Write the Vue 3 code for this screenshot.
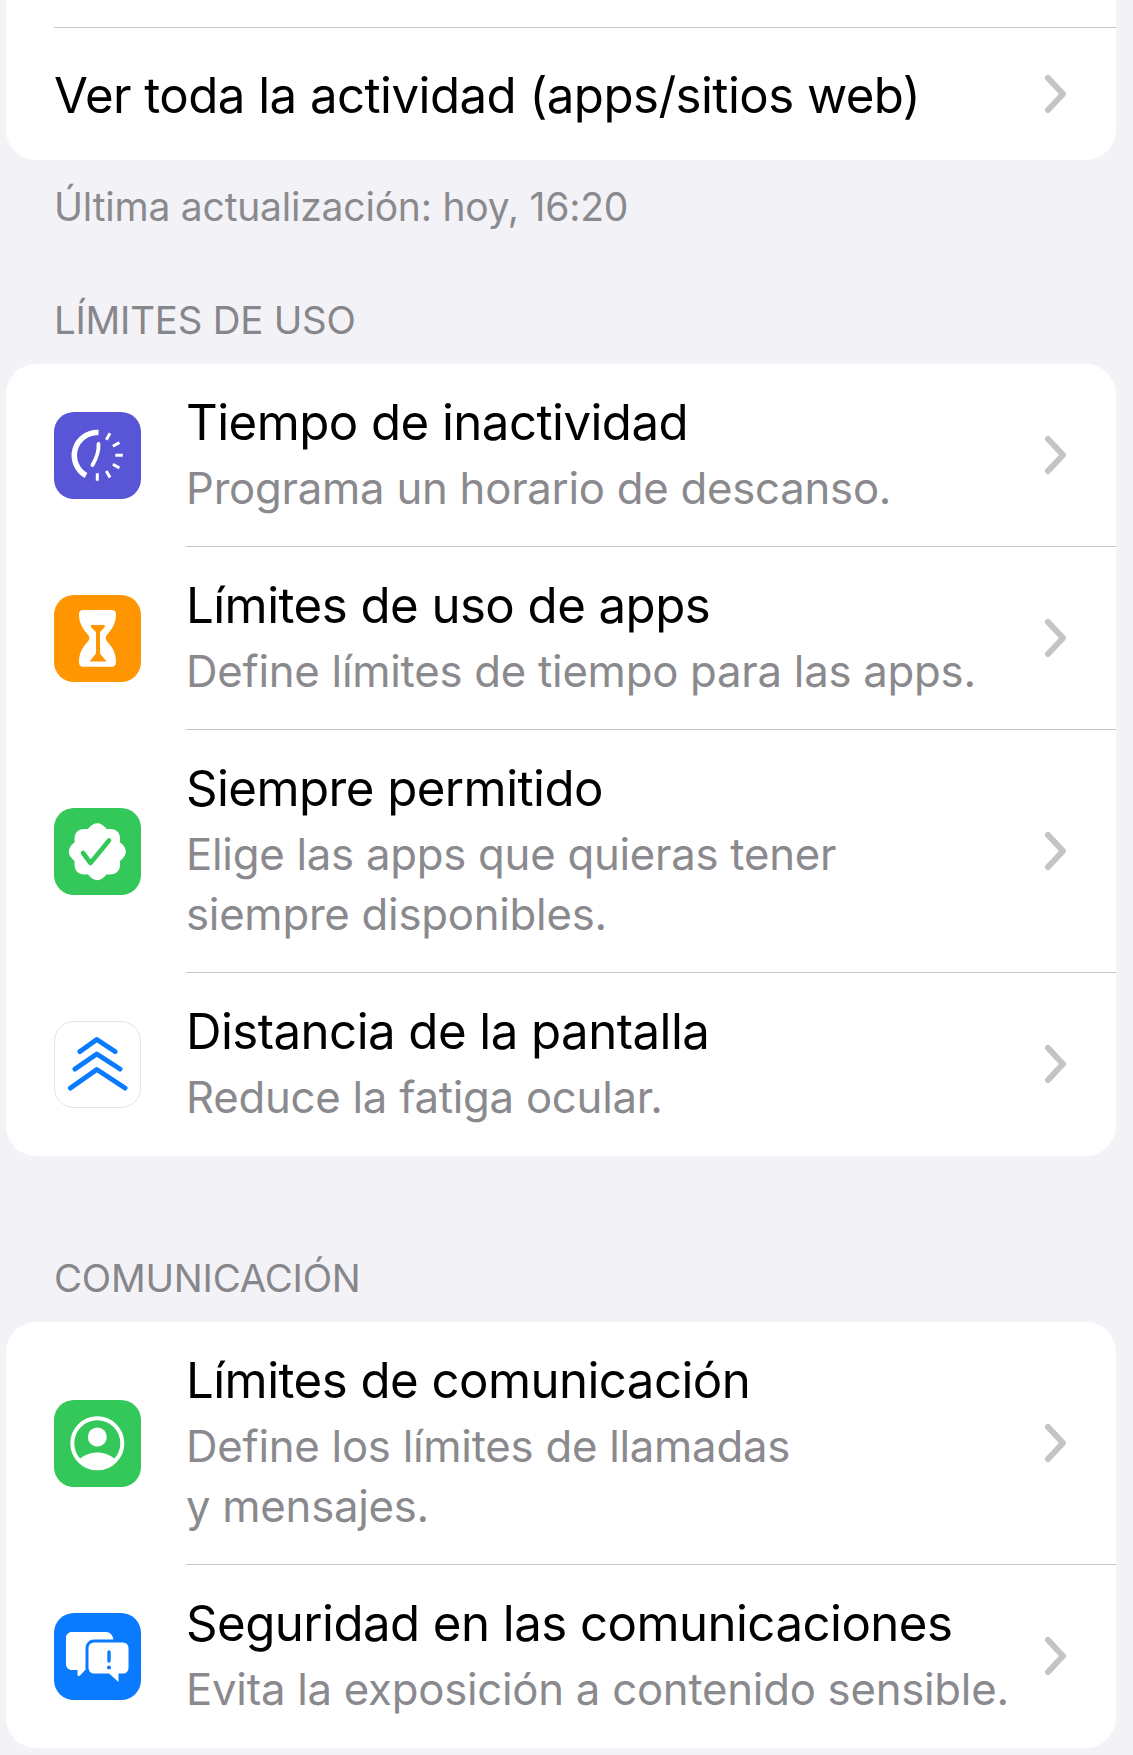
<template>
  <div class="page">
    <section class="card">
      <div class="top-stub"></div>
      <div class="row single">
        <span class="single-title">Ver toda la actividad (apps/sitios web)</span>
        <svg class="chevron" viewBox="0 0 24 40"><path d="M4 4l15 16L4 36" /></svg>
      </div>
    </section>
    <p class="footer-note">Última actualización: hoy, 16:20</p>

    <h2 class="section-title first">LÍMITES DE USO</h2>
    <section class="card">
      <div v-for="item in limits" :key="item.title" class="row">
        <span :class="['icon', item.icon]">
          <svg v-if="item.icon === 'downtime'" viewBox="0 0 87 87">
            <path class="line" d="M44.5 20.500A23 23 0 0 0 32 63.500" stroke-width="5.500" />
            <path class="line round" d="M44.500 32C45 39 42 47 38.500 53" stroke-width="3.800" />
            <path v-for="t in ticks" :key="t" class="line" :d="t" stroke-width="3" />
          </svg>
          <svg v-else-if="item.icon === 'hourglass'" viewBox="0 0 87 87">
            <path fill="#fff" d="M29 15h29c2.500 0 4 1.500 4 4 0 8-3 14-8 19.500-3 3-3 6 0 9 5 5.500 8 11 8 20 0 2.700-1.500 4.200-4 4.200H29c-2.500 0-4-1.500-4-4.200 0-9 3-14.500 8-20 3-3 3-6 0-9-5-5.500-8-11.500-8-19.500 0-2.500 1.500-4 4-4z" />
            <path fill="#ff9500" d="M36.700 30h14.300l-.8 2.800-4.200 4.200V58.500l6.500 8H35.500l6.500-8V37l-4.500-4.200z" />
          </svg>
          <svg v-else-if="item.icon === 'always'" viewBox="0 0 87 87">
            <path fill="#fff" :d="badge" />
            <path class="check" d="M29 45l7.500 10L55 32.500" />
          </svg>
          <svg v-else viewBox="0 0 87 87">
            <path class="blue-line" d="M26 30.500L42.800 18.500 61 30.500" />
            <path class="blue-line" d="M21 48L42.800 33 66 48" />
            <path class="blue-line" d="M16.500 67L42.800 48.500 71 67" />
          </svg>
        </span>
        <div class="row-main">
          <div class="row-text">
            <div class="row-title">{{ item.title }}</div>
            <div class="row-sub" v-html="item.sub"></div>
          </div>
          <svg class="chevron" viewBox="0 0 24 40"><path d="M4 4l15 16L4 36" /></svg>
        </div>
      </div>
    </section>

    <h2 class="section-title">COMUNICACIÓN</h2>
    <section class="card">
      <div v-for="item in comms" :key="item.title" class="row">
        <span :class="['icon', item.icon]">
          <svg v-if="item.icon === 'contact'" viewBox="0 0 87 87">
            <circle cx="43.300" cy="43.300" r="25" fill="none" stroke="#fff" stroke-width="4" />
            <circle cx="43.300" cy="37" r="9.500" fill="#fff" />
            <path fill="#fff" d="M25.500 59C31 54.500 37.500 52.500 43.300 52.500S55.500 54.500 61 59A25 25 0 0 1 25.500 59z" />
          </svg>
          <svg v-else viewBox="0 0 87 87">
            <path fill="#fff" d="M18 19h34c4 0 7 3 7.500 8H40c-4 0-7 3-7 7v21l-7 7.500c-1 1-2.500.5-2.500-1V57H18c-3.500 0-6-2.500-6-6V25c0-3.500 2.500-6 6-6z" />
            <path fill="#fff" stroke="#0a7aff" stroke-width="3" d="M40 28h29c4 0 7 3 7 7v20c0 4-3 7-7 7h-3v7c0 1.500-1.500 2-2.500 1L54.500 62H40c-4 0-7-3-7-7V35c0-4 3-7 7-7z" />
            <path class="bang" d="M55 39v9" />
            <circle cx="55" cy="54.500" r="2" fill="#0a7aff" />
          </svg>
        </span>
        <div class="row-main">
          <div class="row-text">
            <div class="row-title">{{ item.title }}</div>
            <div class="row-sub" v-html="item.sub"></div>
          </div>
          <svg class="chevron" viewBox="0 0 24 40"><path d="M4 4l15 16L4 36" /></svg>
        </div>
      </div>
    </section>
  </div>
</template>

<script setup>
const limits = [
  { icon: 'downtime', title: 'Tiempo de inactividad', sub: 'Programa un horario de descanso.' },
  { icon: 'hourglass', title: 'Límites de uso de apps', sub: 'Define límites de tiempo para las apps.' },
  { icon: 'always', title: 'Siempre permitido', sub: 'Elige las apps que quieras tener<br>siempre disponibles.' },
  { icon: 'distance', title: 'Distancia de la pantalla', sub: 'Reduce la fatiga ocular.' },
]

const comms = [
  { icon: 'contact', title: 'Límites de comunicación', sub: 'Define los límites de llamadas<br>y mensajes.' },
  { icon: 'safety', title: 'Seguridad en las comunicaciones', sub: 'Evita la exposición a contenido sensible.' },
]

// clock ticks fan out from the centre of the downtime icon
const ticks = [-60, -30, 0, 30, 60, 90].map((deg) => {
  const a = (deg * Math.PI) / 180
  const p = (r) => `${(43.3 + r * Math.cos(a)).toFixed(1)} ${(43.3 + r * Math.sin(a)).toFixed(1)}`
  return `M${p(18)}L${p(25.5)}`
})

// scalloped badge behind the check mark, eight rounded bumps
const badge = (() => {
  const n = 8
  const pt = (ang, r) => `${(43.3 + r * Math.cos(ang)).toFixed(1)} ${(43.7 + r * Math.sin(ang)).toFixed(1)}`
  let d = ''
  for (let i = 0; i < n; i++) {
    const peak = (i / n) * Math.PI * 2 - Math.PI / 2
    const step = Math.PI / n
    if (i === 0) d += `M${pt(peak - step, 24.5)}`
    d += `Q${pt(peak, 34.5)} ${pt(peak + step, 24.5)}`
  }
  return d + 'z'
})()
</script>

<style>
html,
body {
  margin: 0;
  background: #f2f2f7;
}
</style>

<style scoped>
.page {
  box-sizing: border-box;
  width: 1133px;
  height: 1755px;
  overflow: hidden;
  padding: 0 17px 0 6px;
  background: #f2f2f7;
  font-family: Inter, 'Noto Sans', sans-serif;
  color: #000;
}

.card {
  background: #fff;
  border-radius: 30px;
}

.card:first-child {
  border-radius: 0 0 30px 30px;
}

.top-stub {
  height: 27px;
  margin-left: 48px;
  border-bottom: 1px solid #c6c6c8;
}

.single {
  height: 132px;
  padding-left: 48px;
  align-items: center;
}

.single-title {
  flex: 1;
  padding-top: 2px;
  font-size: 49.200px;
  letter-spacing: -0.55px;
}

.footer-note {
  margin: 24px 0 0 48px;
  font-size: 39px;
  line-height: 46px;
  letter-spacing: -0.2px;
  color: #8a8a8e;
}

.section-title {
  margin: 100px 0 21.500px 48px;
  font-size: 38.400px;
  line-height: 44px;
  font-weight: 400;
  letter-spacing: -0.2px;
  color: #86868b;
}

.section-title.first {
  margin-top: 68px;
}

.row {
  display: flex;
  align-items: center;
}

.row .icon {
  flex: none;
  width: 87px;
  height: 87px;
  margin: 0 45px 0 48px;
  border-radius: 20px;
  overflow: hidden;
}

.icon svg {
  display: block;
  width: 87px;
  height: 87px;
}

.downtime { background: #5856d6; }
.hourglass { background: #ff9500; }
.always,
.contact { background: #34c759; }
.safety { background: #0a7aff; }

.distance {
  box-sizing: border-box;
  border: 1px solid #e3e3e5;
  background: #fff;
}

.distance svg {
  margin: -1px;
}

.line {
  fill: none;
  stroke: #fff;
  stroke-linecap: butt;
}

.line.round {
  stroke-linecap: round;
}

.check {
  fill: none;
  stroke: #34c759;
  stroke-width: 4.600;
  stroke-linecap: round;
  stroke-linejoin: round;
}

.blue-line {
  fill: none;
  stroke: #0a7aff;
  stroke-width: 5;
  stroke-linecap: round;
  stroke-linejoin: round;
}

.bang {
  fill: none;
  stroke: #0a7aff;
  stroke-width: 3.400;
  stroke-linecap: round;
}

.row-main {
  flex: 1;
  display: flex;
  align-items: center;
  min-width: 0;
  border-bottom: 1px solid #c6c6c8;
  align-self: stretch;
}

.row:last-child .row-main {
  border-bottom: 0;
}

.row-text {
  flex: 1;
  padding: 24px 0 27px;
}

.row:last-child .row-text {
  padding-bottom: 28.500px;
}

.row-title {
  font-size: 49.200px;
  line-height: 68.500px;
  letter-spacing: -0.55px;
}

.row-sub {
  padding-top: 2.500px;
  font-size: 43.700px;
  line-height: 60px;
  letter-spacing: -0.25px;
  color: #8a8a8e;
}

.chevron {
  flex: none;
  width: 24px;
  height: 40px;
  margin-right: 48px;
  fill: none;
  stroke: #c4c4c7;
  stroke-width: 6;
  stroke-linecap: round;
  stroke-linejoin: round;
}
</style>
